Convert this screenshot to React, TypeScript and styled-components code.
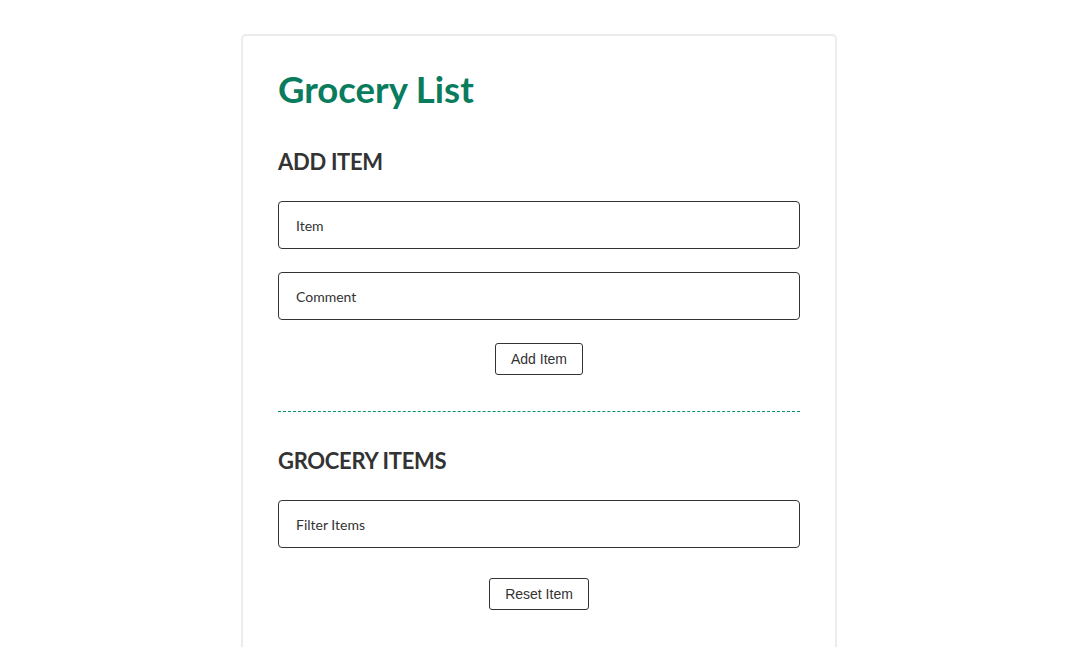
import React from 'react'
import styled, { createGlobalStyle } from 'styled-components'

const GlobalStyle = createGlobalStyle`
  * {
    box-sizing: border-box;
  }
  body {
    margin: 0;
    background: #fff;
    font-family: 'Lato', sans-serif;
    color: #333;
  }
`

const Page = styled.div`
  padding-top: 34px;
  display: flex;
  justify-content: center;
`

const Card = styled.div`
  width: 596px;
  border: 2px solid #ececec;
  border-radius: 5px;
  padding: 32px 35px 40px;
`

const Title = styled.h1`
  margin: 0 0 38px;
  font-size: 36.5px;
  font-weight: 700;
  line-height: 43px;
  color: #087c5c;
`

const SectionTitle = styled.h2`
  margin: 0 0 26px;
  font-size: 22px;
  font-weight: 700;
  line-height: 26px;
  letter-spacing: -0.3px;
  color: #333;
`

const Form = styled.div`
  display: flex;
  flex-direction: column;
  gap: 23px;
`

const Field = styled.input`
  width: 100%;
  height: 48px;
  padding: 1px 17px 0;
  border: 1px solid #333;
  border-radius: 4px;
  font-family: 'Lato', sans-serif;
  font-size: 14px;
  color: #333;
  outline: none;
  &::placeholder {
    color: #333;
  }
`

const ButtonRow = styled.div<{ $top?: number }>`
  display: flex;
  justify-content: center;
  margin-top: ${p => p.$top ?? 0}px;
`

const Button = styled.button`
  height: 32px;
  padding: 0 15px;
  background: #fff;
  border: 1px solid #333;
  border-radius: 3px;
  font-family: 'Liberation Sans', Arial, sans-serif;
  font-size: 14px;
  color: #333;
  cursor: pointer;
`

const Divider = styled.div`
  margin: 36px 0 36px;
  border-top: 1px dashed #00936e;
`

const App: React.FC = () => {
  return (
    <>
      <GlobalStyle />
      <Page>
        <Card>
          <Title>Grocery List</Title>
          <SectionTitle>ADD ITEM</SectionTitle>
          <Form>
            <Field placeholder="Item" />
            <Field placeholder="Comment" />
            <ButtonRow>
              <Button>Add Item</Button>
            </ButtonRow>
          </Form>
          <Divider />
          <SectionTitle>GROCERY ITEMS</SectionTitle>
          <Field placeholder="Filter Items" />
          <ButtonRow $top={30}>
            <Button>Reset Item</Button>
          </ButtonRow>
        </Card>
      </Page>
    </>
  )
}

export default App
